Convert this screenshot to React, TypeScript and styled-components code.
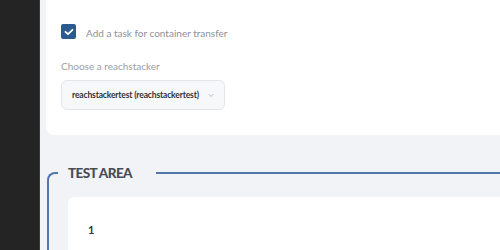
import React from "react";
import styled, { createGlobalStyle } from "styled-components";

const Global = createGlobalStyle`
  html, body { margin: 0; padding: 0; }
  body { font-family: Lato, "Open Sans", sans-serif; background: #f2f3f7; overflow: hidden; }
`;

const Layout = styled.div`
  display: flex;
  width: 500px;
  height: 250px;
  overflow: hidden;
`;

const Sidebar = styled.div`
  width: 39px;
  flex: none;
  background: #242424;
  border-right: 1px solid #3a3a3a;
`;

const Main = styled.div`
  flex: 1;
  display: flex;
  flex-direction: column;
  padding-left: 6px;
  background: #f2f3f7;
  min-width: 0;
`;

const Card = styled.div`
  flex: none;
  background: #ffffff;
  border-radius: 0 0 8px 8px;
  padding: 24px 0 0 15px;
  height: 135px;
  box-sizing: border-box;
  width: 520px;
`;

const CheckRow = styled.label`
  display: flex;
  align-items: center;
  gap: 10px;
`;

const CheckBox = styled.span`
  width: 15px;
  height: 15px;
  border-radius: 2px;
  background: #2a5a8f;
  display: flex;
  align-items: center;
  justify-content: center;
`;

const CheckText = styled.span`
  font-size: 10px;
  color: #8d9199;
  margin-top: 2px;
`;

const FieldLabel = styled.div`
  margin-top: 21px;
  font-size: 10px;
  color: #9a9ea6;
`;

const Select = styled.div`
  margin-top: 8px;
  width: 164px;
  height: 30px;
  box-sizing: border-box;
  border: 1px solid #e2e5ea;
  border-radius: 6px;
  background: #f7f8fa;
  display: flex;
  align-items: center;
  padding: 0 10px;
  gap: 9px;
`;

const SelectText = styled.span`
  font-size: 8.5px;
  font-weight: 700;
  color: #2e323a;
  white-space: nowrap;
  letter-spacing: -0.15px;
`;

const Fieldset = styled.fieldset`
  margin: 30px 0 0 1px;
  padding: 16px 0 0 19px;
  border: none;
  border-top: 2px solid #5277ab;
  border-left: 2px solid #5277ab;
  border-top-left-radius: 8px;
  width: 520px;
  flex: 1;
  min-inline-size: 0;
`;

const Legend = styled.legend`
  margin-left: -10px;
  padding: 0 24px 0 10px;
  font-size: 13.5px;
  font-weight: 900;
  color: #474d56;
  letter-spacing: -0.6px;
`;

const Inner = styled.div`
  background: #ffffff;
  border-radius: 6px 0 0 0;
  height: 80px;
  padding: 21px 0 0 20px;
  box-sizing: border-box;
`;

const Num = styled.span`
  font-size: 11px;
  font-weight: 700;
  color: #333842;
`;

export default function App() {
  return (
    <>
      <Global />
      <Layout>
        <Sidebar />
        <Main>
          <Card>
            <CheckRow>
              <CheckBox>
                <svg width="10" height="8" viewBox="0 0 10 8">
                  <path d="M1.5 3.8 L4 6.2 L8.5 1.8" fill="none" stroke="#fff" strokeWidth="1.8" strokeLinecap="round" strokeLinejoin="round" />
                </svg>
              </CheckBox>
              <CheckText>Add a task for container transfer</CheckText>
            </CheckRow>
            <FieldLabel>Choose a reachstacker</FieldLabel>
            <Select>
              <SelectText>reachstackertest (reachstackertest)</SelectText>
              <svg width="7" height="5" viewBox="0 0 7 5">
                <path d="M1 1 L3.5 3.5 L6 1" fill="none" stroke="#aeb3bb" strokeWidth="1" />
              </svg>
            </Select>
          </Card>
          <Fieldset>
            <Legend>TEST AREA</Legend>
            <Inner>
              <Num>1</Num>
            </Inner>
          </Fieldset>
        </Main>
      </Layout>
    </>
  );
}
